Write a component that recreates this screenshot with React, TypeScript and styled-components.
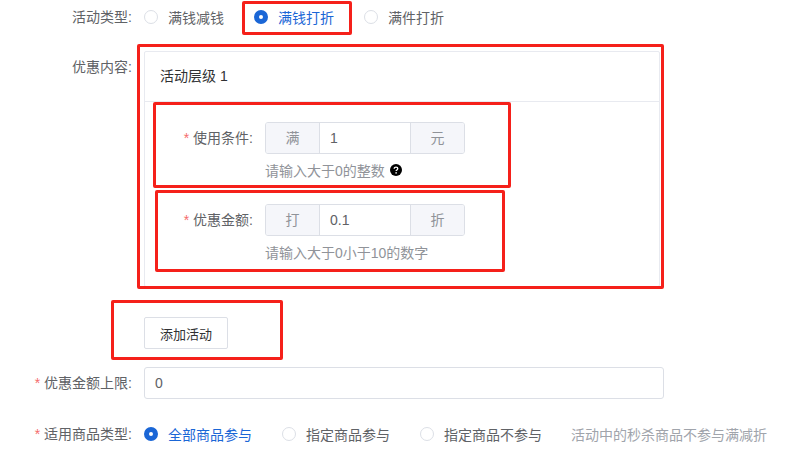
import styled, { createGlobalStyle } from 'styled-components';

const GlobalStyle = createGlobalStyle`
    html, body {
        margin: 0;
        padding: 0;
        background: #fff;
    }
    body {
        font-family: "Liberation Sans", "Noto Sans CJK SC", sans-serif;
        font-size: 14px;
        color: #515a6e;
    }
`;

type RadioOption = {
    label: string;
    checked?: boolean;
    width: number;
};

type Box = {
    x: number;
    y: number;
    w: number;
    h: number;
};

const typeOptions: RadioOption[] = [
    { label: '满钱减钱', width: 110 },
    { label: '满钱打折', checked: true, width: 110 },
    { label: '满件打折', width: 110 },
];

const goodsOptions: RadioOption[] = [
    { label: '全部商品参与', checked: true, width: 138 },
    { label: '指定商品参与', width: 138 },
    { label: '指定商品不参与', width: 138 },
];

const highlights: Box[] = [
    { x: 242, y: 1, w: 110, h: 34 },
    { x: 137, y: 44, w: 527, h: 245 },
    { x: 153, y: 102, w: 358, h: 86 },
    { x: 155, y: 190, w: 350, h: 82 },
    { x: 111, y: 300, w: 172, h: 60 },
];

const RadioList = ({ options }: { options: RadioOption[] }) => (
    <RadioGroup>
        {options.map((option) => (
            <RadioItem key={option.label} $width={option.width} $checked={option.checked}>
                <RadioDot $checked={option.checked} />
                {option.label}
            </RadioItem>
        ))}
    </RadioGroup>
);

const HelpIcon = () => (
    <svg width="12" height="12" viewBox="0 0 12 12">
        <circle cx="6" cy="6" r="6" fill="#000" />
        <path d="M4.2 4.7c0-1 .8-1.6 1.8-1.6s1.8.6 1.8 1.5c0 1.3-1.7 1.3-1.7 2.5" fill="none" stroke="#fff" strokeWidth="1.3" />
        <circle cx="6.1" cy="8.9" r=".8" fill="#fff" />
    </svg>
);

export default function App() {
    return (
        <Page>
            <GlobalStyle />
            <TypeRow>
                <Label>活动类型:</Label>
                <RadioList options={typeOptions} />
            </TypeRow>

            <ContentRow>
                <ContentLabel>优惠内容:</ContentLabel>
                <Panel>
                    <PanelTitle>活动层级 1</PanelTitle>
                    <PanelBody>
                        <TierField>
                            <TierLabel><Star>*</Star>使用条件:</TierLabel>
                            <div>
                                <InputGroup>
                                    <Addon>满</Addon>
                                    <GroupValue>1</GroupValue>
                                    <Addon>元</Addon>
                                </InputGroup>
                                <Hint>请输入大于0的整数 <HelpIcon /></Hint>
                            </div>
                        </TierField>
                        <TierField>
                            <TierLabel><Star>*</Star>优惠金额:</TierLabel>
                            <div>
                                <InputGroup>
                                    <Addon>打</Addon>
                                    <GroupValue>0.1</GroupValue>
                                    <Addon>折</Addon>
                                </InputGroup>
                                <Hint>请输入大于0小于10的数字</Hint>
                            </div>
                        </TierField>
                    </PanelBody>
                </Panel>
            </ContentRow>

            <ButtonRow>
                <AddButton>添加活动</AddButton>
            </ButtonRow>

            <LimitRow>
                <Label><Star>*</Star>优惠金额上限:</Label>
                <TextInput>0</TextInput>
            </LimitRow>

            <GoodsRow>
                <Label><Star>*</Star>适用商品类型:</Label>
                <RadioList options={goodsOptions} />
                <GoodsNote>活动中的秒杀商品不参与满减折</GoodsNote>
            </GoodsRow>

            {highlights.map((box) => (
                <Highlight key={`${box.x}-${box.y}`} $box={box} />
            ))}
        </Page>
    );
}

const Page = styled.div`
    position: relative;
    width: 811px;
    height: 458px;
    overflow: hidden;
`;

const FormRow = styled.div`
    display: grid;
    grid-template-columns: 132px 1fr;
    column-gap: 12px;
    align-items: center;
`;

const TypeRow = styled(FormRow)`
    height: 34px;
`;

const ContentRow = styled(FormRow)`
    align-items: start;
    margin-top: 17px;
`;

const ButtonRow = styled.div`
    padding-left: 144px;
    margin-top: 30px;
`;

const LimitRow = styled(FormRow)`
    margin-top: 18px;
`;

const GoodsRow = styled(FormRow)`
    grid-template-columns: 132px auto 1fr;
    column-gap: 12px;
    height: 32px;
    margin-top: 19px;
`;

const Label = styled.div`
    text-align: right;
    line-height: 18px;
    white-space: nowrap;
    color: #606266;
`;

const ContentLabel = styled(Label)`
    line-height: 32px;
`;

const Star = styled.span`
    color: #f56c6c;
    margin-right: 4px;
`;

const RadioGroup = styled.div`
    display: flex;
    align-items: center;
`;

const RadioItem = styled.div<{ $width: number; $checked?: boolean }>`
    display: flex;
    align-items: center;
    gap: 10px;
    width: ${(p) => p.$width}px;
    color: ${(p) => (p.$checked ? '#1a66d6' : '#606266')};
    white-space: nowrap;
`;

const RadioDot = styled.span<{ $checked?: boolean }>`
    box-sizing: border-box;
    width: 14px;
    height: 14px;
    border-radius: 50%;
    flex: none;
    background: #fff;
    border: ${(p) => (p.$checked ? '5px solid #1a66d6' : '1px solid #dcdfe6')};
`;

const Panel = styled.div`
    box-sizing: border-box;
    width: 516px;
    height: 236px;
    border: 1px solid #e8eaf0;
    border-radius: 2px;
`;

const PanelTitle = styled.div`
    box-sizing: border-box;
    height: 50px;
    padding-left: 15px;
    line-height: 49px;
    color: #303133;
    border-bottom: 1px solid #e8eaf0;
`;

const PanelBody = styled.div`
    display: flex;
    flex-direction: column;
    gap: 25px;
    padding-top: 20px;
`;

const TierField = styled.div`
    display: grid;
    grid-template-columns: 108px 200px;
    column-gap: 12px;
`;

const TierLabel = styled(Label)`
    line-height: 32px;
`;

const InputGroup = styled.div`
    box-sizing: border-box;
    display: flex;
    width: 200px;
    height: 32px;
    border: 1px solid #dcdfe6;
    border-radius: 3px;
    overflow: hidden;
`;

const Addon = styled.div`
    width: 53px;
    flex: none;
    text-align: center;
    line-height: 30px;
    background: #f5f6fa;
    color: #909399;
`;

const GroupValue = styled.div`
    flex: 1;
    padding-left: 10px;
    line-height: 30px;
    border-left: 1px solid #dcdfe6;
    border-right: 1px solid #dcdfe6;
    color: #606266;
`;

const Hint = styled.div`
    display: flex;
    align-items: center;
    gap: 5px;
    height: 18px;
    margin-top: 7px;
    color: #909399;
    white-space: nowrap;
`;

const AddButton = styled.button`
    box-sizing: border-box;
    display: block;
    width: 84px;
    height: 32px;
    padding: 0;
    border: 1px solid #dcdfe6;
    border-radius: 2px;
    background: #fff;
    color: #303133;
    font: inherit;
    font-size: 13px;
`;

const TextInput = styled.div`
    box-sizing: border-box;
    width: 520px;
    height: 32px;
    padding-left: 10px;
    line-height: 30px;
    border: 1px solid #dcdfe6;
    border-radius: 3px;
    color: #606266;
`;

const GoodsNote = styled.div`
    color: #a0a4ab;
    white-space: nowrap;
    margin-left: 1px;
`;

const Highlight = styled.div<{ $box: Box }>`
    position: absolute;
    box-sizing: border-box;
    left: ${(p) => p.$box.x}px;
    top: ${(p) => p.$box.y}px;
    width: ${(p) => p.$box.w}px;
    height: ${(p) => p.$box.h}px;
    border: 3px solid #f5201a;
    border-radius: 2px;
    pointer-events: none;
`;
